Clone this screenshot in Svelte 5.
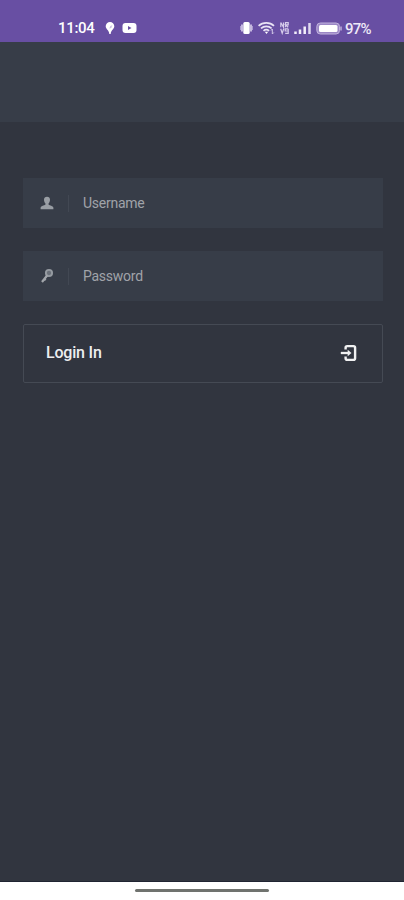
<script lang="ts">
  let username = $state('');
  let password = $state('');

  function login(event: Event) {
    event.preventDefault();
  }
</script>

<div class="screen">
  <header class="status-bar">
    <span class="time">11:04</span>
    <svg class="pin" width="10" height="14" viewBox="0 0 10 14">
      <path fill="#fff" d="M5 1a4.3 4.3 0 0 0-4.3 4.3C.7 8.200 4 9 4.300 13h1.400C6 9 9.300 8.200 9.300 5.300A4.300 4.300 0 0 0 5 1z" />
      <path stroke="#b3a5d5" stroke-width=".8" fill="none" d="M5.200 5.500l2-.6M4.500 7l2-.7" />
    </svg>
    <svg class="video" width="15" height="12" viewBox="0 0 15 12">
      <rect x=".5" y="1" width="14" height="10" rx="3" fill="#fff" />
      <path d="M6 4l3.500 2L6 8z" fill="#684fa3" />
    </svg>

    <div class="indicators">
      <svg width="13" height="14" viewBox="0 0 13 14">
        <rect x="3.300" y="1" width="6.400" height="12" rx="1.500" fill="#fff" />
        <path d="M2 3.500v7M11 3.500v7" stroke="#e4dcf3" stroke-width="1.500" />
        <path d="M.5 5v4M12.500 5v4" stroke="#a999ce" />
      </svg>
      <svg class="wifi" width="18" height="14" viewBox="0 0 18 14">
        <g fill="none" stroke="#e9e3f5" stroke-width="1.700">
          <path d="M.6 4.800c4.200-4 11.200-4 15.400 0" />
          <path d="M3 7.400c3-2.800 7.600-2.800 10.600 0" />
          <path d="M5.500 9.900c1.700-1.500 3.900-1.500 5.600 0" />
        </g>
        <path d="M6.800 10.800h3.400L8.500 13z" fill="#fff" />
        <path d="M14.300 8v5M13 9.500l1.300-1.500M14.300 13l1.500-1.500" stroke="#d3c9e9" fill="none" />
      </svg>
      <svg class="volte" width="9" height="14" viewBox="0 0 9 14">
        <g fill="none" stroke="#d6cceb" stroke-width="1.200">
          <path d="M.8 1.500v4.700M.8 1.500l2.700 4.700V1.500M5.500 6.200V1.700h2.700v2.100H5.500l2.700 2.400" />
          <path d="M.7 7.800l1.500 4.500 1.500-4.500M5.200 12.300h3V10h-3V7.800h3M8.200 7.800V10" />
        </g>
      </svg>
      <svg class="signal" width="18" height="13" viewBox="0 0 18 13">
        <path stroke="#f3effa" stroke-width="2.500" d="M1.500 12V9.500M6 12V7.500M10.700 12V4.500" />
        <path stroke="#e0d8f0" stroke-width="2.500" d="M15.500 12V1" />
      </svg>
      <svg class="battery" width="26" height="13" viewBox="0 0 26 13">
        <rect x=".8" y="1" width="22.700" height="11" rx="3.500" fill="#9b87c5" stroke="#c0b2dd" />
        <rect x="3" y="3" width="18.500" height="7" rx="1.500" fill="#fff" />
        <path d="M25 4.500v4" stroke="#bcaedb" stroke-width="1.500" />
      </svg>
      <span class="percent">97%</span>
    </div>
  </header>

  <div class="app-bar"></div>

  <main>
    <form onsubmit={login}>
      <label class="field">
        <svg class="icon" width="14" height="14" viewBox="0 0 14 14">
          <path fill="#999ea4" d="M7 .8C5.100.8 4 2 4 3.700c0 1.600.6 2.700 1.400 3.600v1.500C4.200 9.700 1 9.900.6 11.700v1.500h12.800v-1.500c-.4-1.800-3.600-2-4.800-2.900V7.300c.8-.9 1.400-2 1.400-3.600C10 2 8.900.8 7 .8z" />
        </svg>
        <span class="divider"></span>
        <input type="text" placeholder="Username" bind:value={username} />
      </label>

      <label class="field">
        <svg class="icon" width="14" height="16" viewBox="0 0 14 16">
          <circle cx="9" cy="5" r="3.100" fill="#6b717a" stroke="#959ba1" stroke-width="1.900" />
          <path d="M7.300 7.200l-5.300 6.800M4.300 11l1.400 1.200" fill="none" stroke="#a1a5aa" stroke-width="2.200" />
        </svg>
        <span class="divider"></span>
        <input type="password" placeholder="Password" bind:value={password} />
      </label>

      <button type="submit">
        <span>Login In</span>
        <svg width="18" height="18" viewBox="0 0 18 18">
          <path d="M5.600 5.500V3.700c0-1 .6-1.600 1.600-1.600h6.300c1 0 1.600.6 1.600 1.600v10.600c0 1-.6 1.600-1.600 1.600H7.200c-1 0-1.600-.6-1.600-1.600v-1.800" fill="none" stroke="#f0f1f2" stroke-width="2.400" />
          <path d="M.8 9h8" stroke="#f0f1f2" stroke-width="2.300" />
          <path d="M7.700 5.700L11.500 9l-3.800 3.300z" fill="#f0f1f2" />
        </svg>
      </button>
    </form>
  </main>

  <footer class="nav-bar">
    <div class="handle"></div>
  </footer>
</div>

<style>
  :global(body) {
    background: #fff;
  }

  .screen {
    display: flex;
    flex-direction: column;
    height: 900px;
    background: #31353f;
    font-family: Roboto, "Liberation Sans", sans-serif;
    overflow: hidden;
  }

  .status-bar {
    display: flex;
    align-items: center;
    flex-shrink: 0;
    box-sizing: border-box;
    height: 42px;
    padding: 14px 32px 0 58px;
    background: #684fa3;
    color: #fff;
    font-size: 15px;
    line-height: 28px;
  }

  .time {
    width: 37px;
    font-weight: 500;
    letter-spacing: -0.3px;
  }

  .pin {
    margin-left: 10px;
  }

  .video {
    margin-left: 7px;
  }

  .indicators {
    display: flex;
    align-items: center;
    margin-left: auto;
  }

  .wifi {
    margin-left: 5px;
  }

  .volte {
    margin-left: 4px;
  }

  .signal {
    margin-left: 5px;
  }

  .battery {
    margin-left: 4px;
  }

  .percent {
    width: 27px;
    margin-left: 3px;
    padding-top: 1px;
    color: #eee9f7;
    font-size: 15px;
    font-weight: 500;
    letter-spacing: -0.8px;
  }

  .app-bar {
    flex-shrink: 0;
    height: 80px;
    background: #373d48;
  }

  main {
    flex: 1;
    padding: 56px 21px 0 23px;
  }

  form {
    display: flex;
    flex-direction: column;
    gap: 23px;
  }

  .field {
    display: flex;
    align-items: center;
    box-sizing: border-box;
    height: 50px;
    padding: 0 17px;
    background: #373d48;
  }

  .divider {
    width: 1px;
    height: 17px;
    margin: 0 14px;
    background: #424853;
  }

  input {
    flex: 1;
    min-width: 0;
    padding: 0;
    border: 0;
    outline: 0;
    background: transparent;
    color: #e8e9eb;
    font: 14px Roboto, "Liberation Sans", sans-serif;
    letter-spacing: -0.25px;
  }

  input::placeholder {
    color: #a0a3a9;
    opacity: 1;
  }

  button {
    display: flex;
    align-items: center;
    justify-content: space-between;
    box-sizing: border-box;
    height: 59px;
    padding: 0 24px 2px 22px;
    border: 1px solid #454a54;
    border-radius: 2px;
    background: transparent;
    color: #edeef0;
    font: 500 16px Roboto, "Liberation Sans", sans-serif;
    letter-spacing: -0.2px;
  }

  .nav-bar {
    display: flex;
    justify-content: center;
    flex-shrink: 0;
    box-sizing: border-box;
    height: 19px;
    padding-top: 7px;
    border-top: 1px solid #202432;
    background: #fff;
  }

  .handle {
    width: 134px;
    height: 3px;
    border-radius: 2px;
    background: #70736f;
  }
</style>
